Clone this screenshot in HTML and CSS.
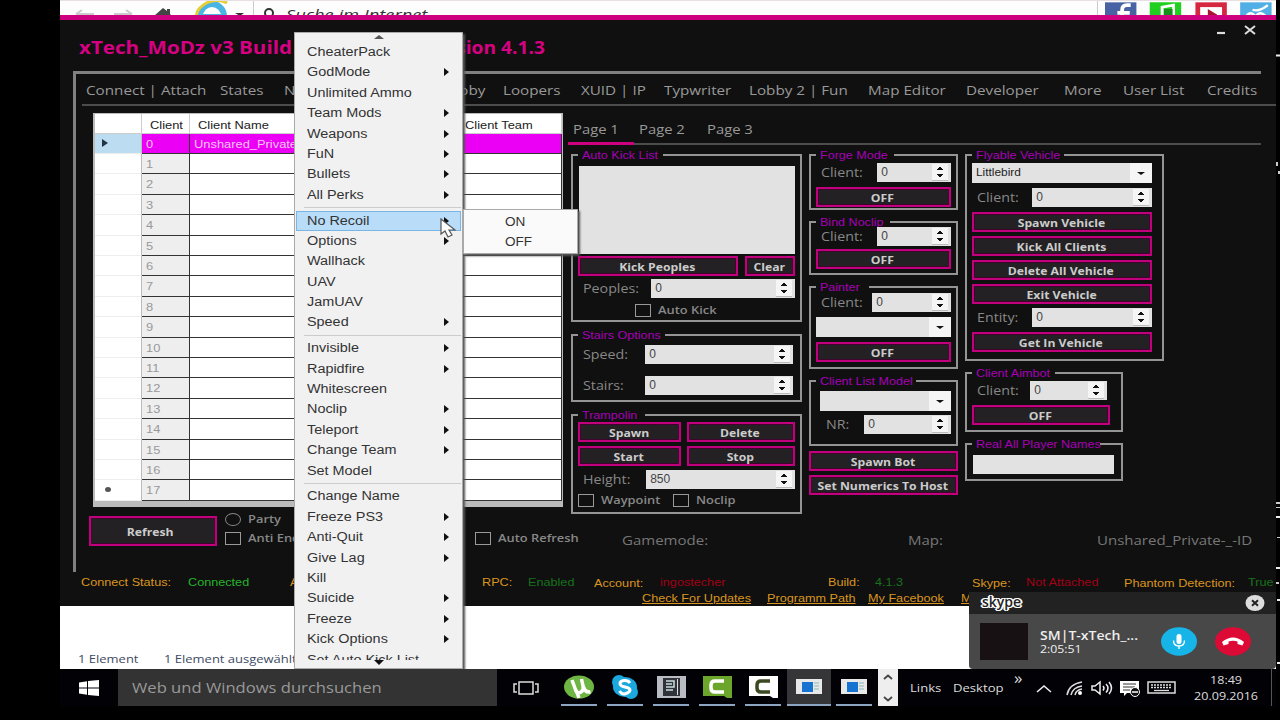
FILE: index.html
```html
<!DOCTYPE html>
<html lang="de">
<head>
    <meta charset="UTF-8">
    <meta name="viewport" content="width=device-width, initial-scale=1.0">
    <title>xTech_MoDz v3</title>
    <link rel="stylesheet" href="styles.css">
</head>
<body>
<div class="desktop">

    <!-- browser behind the tool -->
    <div class="browser">
        <svg class="browser-icons" width="190" height="16" viewBox="0 0 190 16">
            <path d="M16 13h18M16 13l6-4M54 13h18M72 13l-6-4" stroke="#ccc" stroke-width="2" fill="none"/>
            <path d="M94 15l9-8 4 3V8h3v5l2 2v1H96z" fill="#444"/>
            <circle cx="152" cy="15" r="12" fill="none" stroke="#4ab5e3" stroke-width="6"/>
            <path d="M140 15h23" stroke="#4ab5e3" stroke-width="4"/>
            <path d="M136 15C138 4 153-5 167 2" stroke="#e5cf35" stroke-width="3" fill="none"/>
            <path d="M175 12h9l-4 3z" fill="#333"/>
        </svg>
        <div class="browser-search">
            <svg width="16" height="16" viewBox="0 0 16 16"><circle cx="8" cy="12" r="4" fill="none" stroke="#333" stroke-width="2"/></svg>
            <span class="t">Suche im Internet</span>
        </div>
        <svg class="social" width="180" height="16" viewBox="0 0 180 16">
            <path d="M0 1h33v15H0z" fill="#4862a3"/><path d="M27 4h-4q-5 0-5 5v7M13 12h13" stroke="#fff" stroke-width="4" fill="none"/>
            <path d="M47 1h33v15H47z" fill="#20cf20"/><path d="M60 16V6l12-2v12" stroke="#fff" stroke-width="3" fill="none"/><path d="M62 8h9v8h-9z" fill="#15901b"/>
            <path d="M95 1h33v15H95z" fill="#d52740"/><path d="M100 6h23v10h-23z" fill="#fff"/><path d="M108 8l10 6-4 2h-6z" fill="#a51730"/>
            <path d="M142 1h33v15h-33z" fill="#51afe5"/><path d="M155 9q8 2 16-5M148 16q5-7 10 0q5-7 11 0" stroke="#fff" stroke-width="2.5" fill="none"/>
        </svg>
    </div>

    <!-- explorer status bar -->
    <div class="explorer">
        <span class="t">1 Element</span>
        <span class="t">1 Element ausgewählt</span>
    </div>

    <div class="window">
        <div class="titlebar">
            <span class="title t">xTech_MoDz v3 Build</span>
            <span class="title title-end t">Version 4.1.3</span>
            <svg class="controls" width="40" height="14" viewBox="0 0 40 14">
                <path d="M1 10h8" stroke="#ddd" stroke-width="2.2"/>
                <path d="M29 3l10 8M39 3l-10 8" stroke="#ddd" stroke-width="2"/>
            </svg>
        </div>

        <div class="frame">
            <nav class="tabs">
                <span class="t">Connect | Attach</span>
                <span class="t">States</span>
                <span class="t">Non Host</span>
                <span class="t">Lobby</span>
                <span class="t">Loopers</span>
                <span class="t">XUID | IP</span>
                <span class="t">Typwriter</span>
                <span class="t">Lobby 2 | Fun</span>
                <span class="t">Map Editor</span>
                <span class="t">Developer</span>
                <span class="t">More</span>
                <span class="t">User List</span>
                <span class="t">Credits</span>
            </nav>

            <div class="main">
                <div class="clients">
                    <div class="row head">
                        <span></span>
                        <span><b class="t">Client</b></span>
                        <span><b class="t">Client Name</b></span>
                        <span><b class="t">Client Team</b></span>
                    </div>
                    <div id="rows"></div>
                </div>

                <div class="page">
                    <div class="pages">
                        <span class="active"><b class="t">Page 1</b></span>
                        <span><b class="t">Page 2</b></span>
                        <span><b class="t">Page 3</b></span>
                    </div>

                    <div class="columns">
                        <div class="col col1">
                            <fieldset class="kick">
                                <legend><span class="t">Auto Kick List</span></legend>
                                <div class="listbox"></div>
                                <div class="line"><button class="grow"><span class="t">Kick Peoples</span></button><button class="clear"><span class="t">Clear</span></button></div>
                                <div class="line field"><label class="t">Peoples:</label><div class="num w144">0</div></div>
                                <div class="line check auto-kick"><i class="box"></i><span class="t">Auto Kick</span></div>
                            </fieldset>
                            <fieldset class="stairs">
                                <legend><span class="t">Stairs Options</span></legend>
                                <div class="line field"><label class="t">Speed:</label><div class="num w148">0</div></div>
                                <div class="line field"><label class="t">Stairs:</label><div class="num w148">0</div></div>
                            </fieldset>
                            <fieldset class="trampolin">
                                <legend><span class="t">Trampolin</span></legend>
                                <div class="line"><button class="left"><span class="t">Spawn</span></button><button class="grow"><span class="t">Delete</span></button></div>
                                <div class="line"><button class="left"><span class="t">Start</span></button><button class="grow"><span class="t">Stop</span></button></div>
                                <div class="line field"><label class="t">Height:</label><div class="num w149">850</div></div>
                                <div class="line check"><i class="box"></i><span class="t waypoint">Waypoint</span><i class="box"></i><span class="t">Noclip</span></div>
                            </fieldset>
                        </div>

                        <div class="col col2">
                            <fieldset class="forge">
                                <legend><span class="t">Forge Mode</span></legend>
                                <div class="line field"><label class="t">Client:</label><div class="num w74">0</div></div>
                                <button><span class="t">OFF</span></button>
                            </fieldset>
                            <fieldset class="bind">
                                <legend><span class="t">Bind Noclip</span></legend>
                                <div class="line field"><label class="t">Client:</label><div class="num w74">0</div></div>
                                <button><span class="t">OFF</span></button>
                            </fieldset>
                            <fieldset class="painter">
                                <legend><span class="t">Painter</span></legend>
                                <div class="line field"><label class="t">Client:</label><div class="num w79">0</div></div>
                                <div class="combo"></div>
                                <button><span class="t">OFF</span></button>
                            </fieldset>
                            <fieldset class="model">
                                <legend><span class="t">Client List Model</span></legend>
                                <div class="combo"></div>
                                <div class="line field"><label class="t">NR:</label><div class="num w87">0</div></div>
                            </fieldset>
                            <button class="bot"><span class="t">Spawn Bot</span></button>
                            <button class="host"><span class="t">Set Numerics To Host</span></button>
                        </div>

                        <div class="col col3">
                            <fieldset class="vehicle">
                                <legend><span class="t">Flyable Vehicle</span></legend>
                                <div class="combo"><span class="t">Littlebird</span></div>
                                <div class="line field"><label class="t">Client:</label><div class="num w120">0</div></div>
                                <button><span class="t">Spawn Vehicle</span></button>
                                <button><span class="t">Kick All Clients</span></button>
                                <button><span class="t">Delete All Vehicle</span></button>
                                <button><span class="t">Exit Vehicle</span></button>
                                <div class="line field"><label class="t">Entity:</label><div class="num w120">0</div></div>
                                <button><span class="t">Get In Vehicle</span></button>
                            </fieldset>
                            <fieldset class="aimbot">
                                <legend><span class="t">Client Aimbot</span></legend>
                                <div class="line field"><label class="t">Client:</label><div class="num w77">0</div></div>
                                <button><span class="t">OFF</span></button>
                            </fieldset>
                            <fieldset class="names">
                                <legend><span class="t">Real All Player Names</span></legend>
                                <div class="textbox"></div>
                            </fieldset>
                        </div>
                    </div>
                </div>
            </div>

            <div class="bottom">
                <button class="refresh"><span class="t">Refresh</span></button>
                <div class="options">
                    <div class="check"><i class="radio"></i><span class="t">Party</span></div>
                    <div class="check"><i class="box"></i><span class="t">Anti End</span></div>
                </div>
                <div class="check auto-refresh"><i class="box"></i><span class="t">Auto Refresh</span></div>
                <div class="info"><span class="t">Gamemode:</span><span class="t">Map:</span><span class="t">Unshared_Private-_-ID</span></div>
            </div>
        </div>

        <div class="status">
            <span class="t">Connect Status:</span><span class="t ok">Connected</span><span class="t">A</span>
            <span class="t">RPC:</span><span class="t on">Enabled</span>
            <span class="t low">Account:</span><span class="t bad">ingostecher</span>
            <span class="t">Build:</span><span class="t on">4.1.3</span>
            <span class="t low">Skype:</span><span class="t bad">Not Attached</span>
            <span class="t low">Phantom Detection:</span><span class="t on">True</span>
        </div>
        <div class="links">
            <a class="t">Check For Updates</a><a class="t">Programm Path</a><a class="t">My Facebook</a><a class="t">M</a>
        </div>
    </div>

    <!-- context menu -->
    <div class="menu">
        <div class="scroll up"></div>
        <div class="item"><span class="t">CheaterPack</span></div>
        <div class="item sub"><span class="t">GodMode</span></div>
        <div class="item"><span class="t">Unlimited Ammo</span></div>
        <div class="item sub"><span class="t">Team Mods</span></div>
        <div class="item sub"><span class="t">Weapons</span></div>
        <div class="item sub"><span class="t">FuN</span></div>
        <div class="item sub"><span class="t">Bullets</span></div>
        <div class="item sub"><span class="t">All Perks</span></div>
        <div class="sep"></div>
        <div class="item sub selected"><span class="t">No Recoil</span></div>
        <div class="item sub"><span class="t">Options</span></div>
        <div class="item"><span class="t">Wallhack</span></div>
        <div class="item"><span class="t">UAV</span></div>
        <div class="item"><span class="t">JamUAV</span></div>
        <div class="item sub"><span class="t">Speed</span></div>
        <div class="sep"></div>
        <div class="item sub"><span class="t">Invisible</span></div>
        <div class="item sub"><span class="t">Rapidfire</span></div>
        <div class="item"><span class="t">Whitescreen</span></div>
        <div class="item sub"><span class="t">Noclip</span></div>
        <div class="item sub"><span class="t">Teleport</span></div>
        <div class="item sub"><span class="t">Change Team</span></div>
        <div class="item"><span class="t">Set Model</span></div>
        <div class="sep"></div>
        <div class="item"><span class="t">Change Name</span></div>
        <div class="item sub"><span class="t">Freeze PS3</span></div>
        <div class="item sub"><span class="t">Anti-Quit</span></div>
        <div class="item sub"><span class="t">Give Lag</span></div>
        <div class="item"><span class="t">Kill</span></div>
        <div class="item sub"><span class="t">Suicide</span></div>
        <div class="item sub"><span class="t">Freeze</span></div>
        <div class="item sub"><span class="t">Kick Options</span></div>
        <div class="item cut"><span class="t">Set Auto Kick List</span></div>
        <div class="scroll down"></div>
    </div>
    <div class="submenu">
        <div class="item"><span class="t">ON</span></div>
        <div class="item"><span class="t">OFF</span></div>
    </div>
    <svg class="cursor" width="16" height="20" viewBox="0 0 16 20"><path d="M1 1v15l4-3 3 6 4-2-3-5h6z" fill="#fff" stroke="#555" stroke-width="1.2"/></svg>

    <!-- skype call -->
    <div class="skype">
        <div class="skype-head">
            <span class="skype-logo">skype</span>
            <svg width="20" height="16" viewBox="0 0 20 16"><ellipse cx="10" cy="8" rx="9.5" ry="8" fill="#ddd"/><path d="M7 5.3l6 5.4M13 5.3l-6 5.4" stroke="#222" stroke-width="2"/></svg>
        </div>
        <div class="skype-body">
            <div class="avatar"></div>
            <div class="caller"><b class="t">SM|T-xTech_...</b><span class="t">2:05:51</span></div>
            <svg class="mic" width="36" height="29" viewBox="0 0 36 29"><ellipse cx="18" cy="14.5" rx="18" ry="14.2" fill="#17b4e8"/><rect x="15.5" y="7" width="5" height="10" rx="2.5" fill="#fff"/><path d="M12.5 13.5q0 5.5 5.5 5.5t5.5-5.5M18 19v3" stroke="#fff" stroke-width="1.4" fill="none"/></svg>
            <svg width="36" height="29" viewBox="0 0 36 29"><ellipse cx="18" cy="14.5" rx="18" ry="14.2" fill="#dc0a35"/><path d="M7 15q11-9 22 0l-1.5 3.5-5-1.5v-2.5q-4.5-1.5-9 0V17l-5 1.5z" fill="#fff"/></svg>
        </div>
    </div>

    <div class="taskbar">
        <div class="start"><svg width="20" height="16" viewBox="0 0 20 16"><path d="M0 2.5l8-1.2v6.2H0zM9 1.1L20 0v7.5H9zM0 8.5h8v6.2l-8-1.2zM9 8.5h11V16L9 14.9z" fill="#fff"/></svg></div>
        <div class="search"><span class="t">Web und Windows durchsuchen</span></div>
        <div class="taskview"><svg width="26" height="14" viewBox="0 0 26 14"><path d="M6 1h14v12H6zM4 3H1v8h3M22 3h3v8h-3" fill="none" stroke="#ddd" stroke-width="1.5"/></svg></div>
        <div class="apps">
            <div class="app"><svg width="30" height="24" viewBox="0 0 30 24"><ellipse cx="15" cy="12" rx="15" ry="11.5" fill="#6fb544"/><path d="M8 5l4 11q2 3 5 1t2-6l-1.5-7M18.500 9q2 9 8 8" stroke="#fff" stroke-width="3.5" fill="none"/><path d="M12 15l3 8" stroke="#fff" stroke-width="3.5"/></svg></div>
            <div class="app"><svg width="28" height="24" viewBox="0 0 28 24"><ellipse cx="14" cy="12" rx="12" ry="10" fill="#1ba8df"/><circle cx="8" cy="7" r="7" fill="#1ba8df"/><circle cx="20" cy="17" r="7" fill="#1ba8df"/><path d="M19 8q-2-3-6-2.500t-4 3 5 3.500 5 3-4 3.500-6.500-2.500" stroke="#fff" stroke-width="3" fill="none"/></svg></div>
            <div class="app"><svg width="29" height="24" viewBox="0 0 29 24"><path d="M0 1h29v22H0z" fill="#b9bcc2"/><path d="M6 3h17v18H6z" fill="#30343a"/><path d="M9 6h8v6H9M9 9h6M9 15h7" stroke="#cdd" stroke-width="1.5" fill="none"/><path d="M20 4h1v16h-1z" fill="#ddd"/></svg></div>
            <div class="app"><svg width="29" height="24" viewBox="0 0 29 24"><path d="M0 1h29v22h-5l-3-2H0z" fill="#6ca52c"/><path d="M21 6H12q-4 0-4 4v3q0 4 4 4h9" stroke="#fff" stroke-width="3.5" fill="none"/></svg></div>
            <div class="app"><svg width="29" height="24" viewBox="0 0 29 24"><path d="M0 1h29v22h-5l-3-2H0z" fill="#fff"/><path d="M21 6H12q-4 0-4 4v3q0 4 4 4h9" stroke="#3b4a23" stroke-width="3.5" fill="none"/></svg></div>
            <div class="app current"><svg width="26" height="16" viewBox="0 0 26 16"><path d="M0 0h26v15H0z" fill="#e8e8e8"/><path d="M6 3h11v10H6z" fill="#1673d1"/><path d="M18 4h5M18 7h5M18 10h5" stroke="#8bb"/></svg></div>
            <div class="app"><svg width="26" height="16" viewBox="0 0 26 16"><path d="M0 0h26v15H0z" fill="#e8e8e8"/><path d="M6 3h11v10H6z" fill="#1673d1"/><path d="M18 4h5M18 7h5M18 10h5" stroke="#8bb"/></svg></div>
        </div>
        <div class="scroller"><svg width="20" height="37" viewBox="0 0 20 37"><path d="M6 10l4-3.5 4 3.5M6 28l4 3.5 4-3.5" fill="none" stroke="#444" stroke-width="1.8"/></svg></div>
        <div class="toolbars"><span class="t">Links</span><span class="t">Desktop</span><span class="more">»</span></div>
        <svg class="tray" width="142" height="20" viewBox="0 0 142 20">
            <path d="M1 14l7-6 7 6" fill="none" stroke="#eee" stroke-width="1.6"/>
            <path d="M31 17q2-11 15-13M35 17q2-8 11-9M39 17q1-5 7-6" fill="none" stroke="#ddd" stroke-width="1.5"/><circle cx="44" cy="15" r="2" fill="#fff"/>
            <path d="M56 8h3l5-4v12l-5-4h-3zM67 8q2 2 0 4.5M70 6q4 4 0 8.5M73 4q5 6 0 12" fill="none" stroke="#eee" stroke-width="1.5"/>
            <path d="M84 3h19v12H91l-3 3v-3h-4z" fill="#fff"/><path d="M87 6h13M87 9h12M87 12h7" stroke="#333"/><circle cx="99" cy="14" r="4.5" fill="#111" stroke="#fff"/><path d="M96 14h6" stroke="#fff" stroke-width="1.5"/>
            <path d="M112 4h27v11h-27z" fill="none" stroke="#ddd" stroke-width="1.5"/><path d="M115 7h21M115 9.5h21" stroke="#ddd" stroke-width="1.3" stroke-dasharray="2 1"/><path d="M118 12.5h15" stroke="#ddd" stroke-width="1.3"/>
        </svg>
        <div class="clock"><span class="t">18:49</span><span class="t">20.09.2016</span></div>
        <div class="peek"></div>
    </div>
    <svg class="edge" width="4" height="720" viewBox="0 0 4 720"><path d="M0 55.5h4M0 517h4M0 568h4M1 600h3M1 663h3" stroke="#eee" stroke-width="2"/><path d="M0 162h2v4H0zM2 171h2v3H2zM0 502h4v2H0zM0 507h4v1H0zM1 537h3v1H1zM0 582h3v2H0z" fill="#ccc"/></svg>
</div>

<script>
const rows = document.getElementById('rows');

for (let i = 0; i < 18; i++) {
    const row = document.createElement('div');
    row.className = i === 0 ? 'row current' : 'row';
    const mark = i === 0 ? '<i class="pointer"></i>' : (i === 17 ? '<i class="star"></i>' : '');
    const name = i === 0 ? '<b class="t">Unshared_Private</b>' : '';
    row.innerHTML = '<span>' + mark + '</span><span><b class="t">' + i + '</b></span><span>' + name + '</span><span></span>';
    rows.appendChild(row);
}
</script>
</body>
</html>
```
FILE: styles.css
```css
* {
    box-sizing: border-box;
}
body {
    margin: 0;
    background: #000;
    font-family: "Open Sans", sans-serif;
}
.desktop {
    position: relative;
    width: 1280px;
    height: 720px;
    overflow: hidden;
    background: #000;
}
/* wide text, the desktop is stretched horizontally */
.t {
    display: inline-block;
    white-space: nowrap;
    font-weight: inherit;
    transform: scaleX(var(--s, 1.17));
    transform-origin: left center;
}

/* browser */
.browser {
    position: absolute;
    left: 60px;
    top: 0;
    width: 1216px;
    height: 16px;
    display: flex;
    overflow: hidden;
    background: #fdfdfd;
    border-top: 1px solid #e8dfe2;
}
.browser-icons {
    flex: none;
}
.browser-search {
    display: flex;
    gap: 9px;
    width: 887px;
    margin-left: 3px;
    padding-left: 7px;
    border-left: 1px solid #ccc;
    border-right: 1px solid #ccc;
    font-size: 15px;
    font-style: italic;
    line-height: 26px;
    color: #333;
    margin-right: 7px;
    --s: 1.22;
}

/* explorer */
.explorer {
    position: absolute;
    left: 60px;
    top: 606px;
    width: 1216px;
    height: 63px;
    display: flex;
    gap: 35px;
    align-items: flex-end;
    padding: 0 0 3px 18px;
    background: #fff;
    font-size: 11px;
    color: #3c4a63;
    --s: 1.18;
}

/* tool window */
.window {
    position: absolute;
    left: 60px;
    top: 15px;
    width: 1216px;
    height: 591px;
    background: #101010;
    border-top: 5px solid #cd0080;
    color: #999;
}
.titlebar {
    display: flex;
    height: 51px;
    padding: 0 20px 0 19px;
    --s: 1.21;
}
.title {
    width: 330px;
    padding-top: 15px;
    font-size: 17px;
    line-height: 26px;
    font-weight: bold;
    color: #d60082;
}
.title-end {
    width: 136px;
    text-align: right;
    transform-origin: right center;
    --s: 1.13;
}
.controls {
    margin: 3px 0 0 auto;
}
.frame {
    width: 1188px;
    height: 501px;
    margin-left: 13px;
    border-top: 3px solid #808080;
    border-left: 3px solid #808080;
}
.tabs {
    display: grid;
    grid-template-columns: 134px 64px 158px 61px 78px 83px 85px 119px 98px 98px 59px 84px 60px;
    width: 1194px;
    height: 32px;
    margin-left: 6px;
    padding-left: 4px;
    border-bottom: 2px solid #4c4c4c;
    font-size: 13px;
    line-height: 33px;
}
.main {
    display: flex;
    height: 401px;
}

/* client table */
.clients {
    width: 471px;
    height: 394px;
    margin: 7px 5px 0 17px;
    border: solid #bbb;
    border-width: 1px 1px 6px 2px;
    background: #fff;
    font-family: "Liberation Sans", sans-serif;
    font-size: 11px;
    line-height: 19px;
    color: #999;
}
.row {
    display: grid;
    grid-template-columns: 47px 48px 273px 1fr;
    grid-template-rows: 100%;
    height: 20px;
}
/* pitch is 20.4px, so every second or third row gets a pixel more */
#rows .row:nth-child(5n+3),
#rows .row:nth-child(5n) {
    height: 21px;
}
.row span {
    padding-left: 4px;
    border-bottom: 1px solid #333;
    border-right: 1px solid #333;
}
.row b {
    height: 19px;
    line-height: 21px;
    vertical-align: top;
}
.row span:first-child {
    border-bottom-color: #eee;
    border-right-color: #bbb;
    padding-left: 7px;
}
.row span:nth-child(2) {
    background: #eee;
}
.row.head span {
    padding-left: 8px;
    color: #222;
    background: #fff;
    border-color: #ccc;
}
.row.head b {
    line-height: 22px;
}
.row.head span:last-child {
    padding-left: 2px;
}
.row.current span {
    color: #f5c8f5;
    background: #ec00f5;
}
.row.current span:first-child {
    background: #bcdcf2;
}
.pointer {
    display: inline-block;
    border: solid transparent;
    border-width: 4px 0 4px 6px;
    border-left-color: #234;
}
.star {
    display: inline-block;
    width: 6px;
    height: 5px;
    margin: 0 0 1px 3px;
    border-radius: 50%;
    background: #555;
}

/* pages */
.page {
    width: 694px;
}
.pages {
    display: flex;
    height: 39px;
    padding-top: 11px;
    border-bottom: 2px solid #4c4c4c;
    font-size: 13px;
    line-height: 24px;
    --s: 1.14;
}
.pages span {
    width: 68px;
    height: 28px;
    padding-left: 5px;
}
.pages .active {
    width: 66px;
    border-bottom: 3px solid #cd0080;
}
.columns {
    display: flex;
    gap: 7px;
    padding: 3px 0 0 3px;
}
.col {
    display: flex;
    flex-direction: column;
}
.col1 { width: 231px; }
.col2 { width: 149px; }
.col3 { width: 199px; }

fieldset {
    min-width: 0;
    margin: 0;
    padding: 0 5px;
    border: 2px solid #949494;
}
legend {
    height: 14px;
    padding: 0 14px 0 4px;
    font-family: "Liberation Sans", sans-serif;
    font-size: 11px;
    line-height: 14px;
    color: #a600b6;
    --s: 1.14;
}
button {
    display: block;
    width: 100%;
    height: 20px;
    padding: 0 2px 0 0;
    margin: 0 0 4px;
    border: 2px solid #c0007d;
    outline: 1px solid #40052c;
    outline-offset: -3px;
    background: #232123;
    font-family: "Open Sans", sans-serif;
    font-size: 11px;
    font-weight: bold;
    line-height: 15px;
    color: #ccc;
    --s: 1.11;
}
button .t {
    transform-origin: center;
}
.line {
    display: flex;
    gap: 6px;
}
.grow {
    flex: 1;
}
.left {
    width: 103px;
}
.field {
    justify-content: space-between;
    height: 19px;
    margin-bottom: 5px;
    padding-left: 5px;
    font-size: 12.5px;
    line-height: 20px;
    color: #888;
    --s: 1.14;
}
.num {
    position: relative;
    height: 19px;
    padding-left: 4px;
    background: #e2e2e2;
    font-family: "Liberation Sans", sans-serif;
    font-size: 12px;
    line-height: 18px;
    color: #444;
}
/* spinner arrows, built up from 1px lines */
.num::before,
.num::after {
    content: "";
    position: absolute;
    right: 3px;
    width: 16px;
    height: 8px;
    background-color: #f5f5f5;
    background-image: linear-gradient(#111, #111), linear-gradient(#111, #111), linear-gradient(#111, #111);
    background-repeat: no-repeat;
    background-size: 2px 1px, 4px 1px, 6px 1px;
    border-bottom: 1px solid #bbb;
}
.num::before {
    top: 1px;
    background-position: 7px 3px, 6px 4px, 5px 5px;
}
.num::after {
    bottom: 1px;
    background-position: 7px 4px, 6px 3px, 5px 2px;
}
.w74 { width: 74px; }
.w77 { width: 77px; }
.w79 { width: 79px; }
.w87 { width: 87px; }
.w120 { width: 120px; }
.w144 { width: 144px; }
.w148 { width: 148px; }
.w149 { width: 149px; }
.combo {
    position: relative;
    height: 20px;
    margin-bottom: 5px;
    padding-left: 4px;
    background: linear-gradient(90deg, #e2e2e2 calc(100% - 22px), #f5f5f5 0);
    font-family: "Liberation Sans", sans-serif;
    font-size: 11px;
    line-height: 19px;
    color: #222;
    --s: 1.08;
}
.combo::after {
    content: "";
    position: absolute;
    right: 7px;
    top: 9px;
    border: solid transparent;
    border-width: 3px 4px 0;
    border-top-color: #111;
}
.check {
    display: flex;
    align-items: center;
    gap: 7px;
    font-size: 11.5px;
    font-weight: 600;
    line-height: 14px;
    color: #888;
    --s: 1.12;
}
.box {
    flex: none;
    width: 16px;
    height: 13px;
    border: 1px solid #999;
}
.radio {
    flex: none;
    width: 16px;
    height: 13px;
    border: 1px solid #888;
    border-radius: 50%;
}

.kick { height: 174px; margin-bottom: 6px; }
.kick .listbox {
    width: 216px;
    height: 88px;
    margin: 4px 0 3px 1px;
    background: #e2e2e2;
}
.kick .grow { margin-right: 1px; }
.kick .clear { width: 50px; }
.kick .line { margin-top: -1px; }
.kick .auto-kick { margin-top: 0; padding-left: 57px; }
.stairs { height: 74px; margin-bottom: 6px; padding-right: 7px; }
.stairs .field { margin: 3px 0 12px; }
.trampolin { height: 106px; }
.trampolin .field { margin-bottom: 4px; }
.trampolin .waypoint { width: 65px; }

.forge { height: 62px; margin-bottom: 5px; }
.bind { height: 60px; margin-bottom: 5px; }
.painter { height: 89px; margin-bottom: 5px; }
.model { height: 72px; margin-bottom: 5px; }
.forge .field { margin-top: 1px; }
.bind .field { margin: -2px 0 3px; }
.painter .field { margin-top: -1px; }
.model .combo { margin: 3px 0 5px 4px; }
.model .field { margin-top: -1px; padding-left: 10px; }
.vehicle { height: 213px; margin-bottom: 5px; padding-right: 10px; }
.vehicle .combo { margin-top: 1px; }
.aimbot { width: 158px; height: 66px; margin-bottom: 5px; padding-right: 11px; }
.aimbot .field { margin: 1px 3px 5px 0; }
.names { width: 158px; height: 44px; }
.textbox { height: 19px; margin: 4px 2px 0 1px; background: #e2e2e2; }

/* bottom of frame */
.bottom {
    display: flex;
    padding: 9px 0 0 13px;
}
.bottom .refresh {
    width: 128px;
    height: 30px;
    flex: none;
    padding-right: 6px;
    line-height: 25px;
}
.options {
    display: flex;
    flex-direction: column;
    gap: 5px;
    width: 250px;
    padding-left: 8px;
    margin-top: -4px;
}
.auto-refresh {
    height: 14px;
    width: 147px;
    margin-top: 15px;
    margin-left: 8px;
}
.info {
    display: grid;
    grid-template-columns: 286px 189px 160px;
    margin-top: 14px;
    font-size: 13px;
    line-height: 20px;
    color: #777;
    --s: 1.155;
}

.status {
    display: grid;
    grid-template-columns: 107px 102px 192px 46px 66px 66px 168px 47px 97px 54px 98px 124px 30px;
    height: 17px;
    padding-left: 21px;
    font-family: "Liberation Sans", sans-serif;
    font-size: 11px;
    line-height: 20px;
    color: #d9951f;
    --s: 1.15;
}
.status .ok { color: #25b52a; }
.status .on { color: #17721c; }
.status .bad { color: #a00016; }
.status .low { padding-top: 1px; }
.links {
    display: grid;
    grid-template-columns: 125px 101px 93px 80px;
    padding-left: 582px;
    font-family: "Liberation Sans", sans-serif;
    font-size: 11px;
    line-height: 18px;
    color: #d9951f;
    --s: 1.15;
}
.links .t {
    text-decoration: underline;
    justify-self: start;
}

/* menus */
.menu,
.submenu {
    position: absolute;
    background: #f1f1f2;
    font-family: "Liberation Sans", sans-serif;
    font-size: 12px;
    line-height: 20.4px;
    color: #333;
    border: 1px solid #aaa;
    box-shadow: 2px 2px 2px #555;
    --s: 1.2;
}
.menu {
    left: 294px;
    top: 32px;
    width: 169px;
    height: 637px;
    padding: 0 1px;
}
.item {
    position: relative;
    height: 20.4px;
    padding-left: 11px;
}
.item.sub::after {
    content: "";
    position: absolute;
    right: 12px;
    top: 6px;
    border: solid transparent;
    border-width: 4px 0 4px 5px;
    border-left-color: #111;
}
.item.selected {
    background: #b9dcf8;
    box-shadow: inset 0 0 0 1px #79b6e5;
}
.item.cut {
    height: 10px;
    overflow: hidden;
}
.sep {
    height: 1px;
    margin: 2px 0 2.4px 8px;
    background: #ccc;
}
.scroll {
    width: 10px;
    margin: 0 auto;
    border: solid transparent;
}
.scroll.up {
    margin-top: 2px;
    margin-bottom: 3px;
    border-width: 0 5px 4px;
    border-bottom-color: #555;
}
.scroll.down {
    border-width: 5px 5px 0;
    border-top-color: #111;
}
.submenu {
    left: 463px;
    top: 209px;
    width: 115px;
    height: 45px;
    padding-top: 2px;
    background: #fafafa;
}
.submenu .item {
    padding-left: 41px;
    --s: 1.13;
}
.cursor {
    position: absolute;
    left: 440px;
    top: 218px;
}

/* skype */
.skype {
    position: absolute;
    left: 969px;
    top: 592px;
    width: 307px;
    height: 77px;
    background: #484848;
    border-radius: 0 0 4px 4px;
}
.skype-head {
    display: flex;
    justify-content: space-between;
    align-items: center;
    height: 22px;
    padding: 0 11px;
    background: #222;
}
.skype-logo {
    padding: 0 2px;
    font-size: 14px;
    font-weight: 600;
    line-height: 16px;
    margin-top: -3px;
    color: #222;
    text-shadow: 1px 1px #fff, -1px -1px #fff, 1px -1px #fff, -1px 1px #fff, 2px 0 #fff, -2px 0 #fff;
}
.skype-body {
    display: flex;
    align-items: center;
    height: 55px;
    padding-left: 11px;
}
.avatar {
    width: 48px;
    height: 37px;
    background: #171113;
}
.caller {
    display: flex;
    flex-direction: column;
    align-items: flex-start;
    width: 133px;
    padding-left: 12px;
    font-size: 10.5px;
    line-height: 13px;
    color: #eee;
}
.caller b {
    font-size: 12px;
    font-weight: 600;
    line-height: 15px;
}
.mic {
    margin-right: 18px;
}

/* taskbar */
.taskbar {
    position: absolute;
    left: 60px;
    top: 669px;
    width: 1216px;
    height: 37px;
    display: flex;
    align-items: center;
    background: #020206;
}
.start {
    width: 58px;
    padding-left: 19px;
    line-height: 0;
}
.search {
    width: 379px;
    height: 37px;
    padding-left: 14px;
    background: #333;
    font-size: 14px;
    line-height: 37px;
    color: #999;
    --s: 1.185;
}
.taskview {
    width: 64px;
    padding-left: 16px;
    line-height: 0;
}
.apps {
    display: flex;
    gap: 2px;
}
.app {
    display: flex;
    align-items: center;
    justify-content: center;
    width: 36px;
    height: 37px;
    margin-right: 8px;
    border-bottom: 2px solid #8ca5c2;
}
.app.current {
    width: 44px;
    margin: 0 3px 0 -4px;
    background: #363638;
}
.app:last-child {
    margin-right: 0;
}
.scroller {
    width: 20px;
    height: 37px;
    margin-left: 6px;
    background: #eee;
}
.toolbars {
    display: flex;
    width: 138px;
    padding-left: 12px;
    font-size: 11.5px;
    line-height: 20px;
    color: #ddd;
    --s: 1.14;
}
.toolbars .t {
    width: 43px;
}
.toolbars .more {
    margin: -10px 0 0 18px;
    font-size: 17px;
}
.clock {
    display: flex;
    flex-direction: column;
    align-items: center;
    width: 66px;
    margin-left: 15px;
    font-size: 11px;
    line-height: 16px;
    color: #ddd;
    --s: 1.14;
}
.clock .t {
    transform-origin: center;
}
.peek {
    width: 1px;
    height: 37px;
    margin-left: 12px;
    background: #555;
}
.edge {
    position: absolute;
    left: 1276px;
    top: 0;
}
```
